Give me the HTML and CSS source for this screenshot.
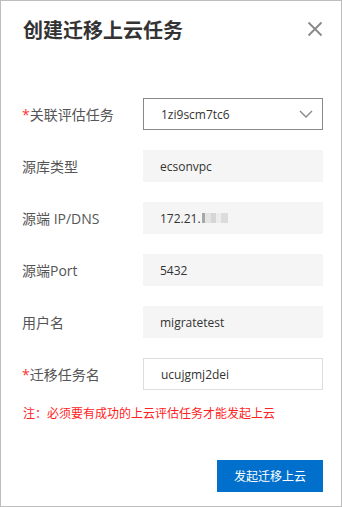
FILE: index.html
```html
<!DOCTYPE html>
<html lang="zh">
<head>
<meta charset="UTF-8">
<title>创建迁移上云任务</title>
<link rel="stylesheet" href="styles.css">
</head>
<body>
  <div class="dialog">
    <div class="dialog-head">
      <h2 class="title">创建迁移上云任务</h2>
      <span class="close">
        <svg width="16" height="16" viewBox="0 0 16 16"><path d="M1.5 1.5 L14.5 14.5 M14.5 1.5 L1.5 14.5" stroke="#888" stroke-width="1.8" fill="none"/></svg>
      </span>
    </div>
    <div class="form">
      <div class="row">
        <label class="label"><em>*</em>关联评估任务</label>
        <div class="ctrl select">
          <span>1zi9scm7tc6</span>
          <svg width="14" height="8" viewBox="0 0 14 8"><path d="M1 1 L7 7 L13 1" stroke="#888" stroke-width="1.4" fill="none"/></svg>
        </div>
      </div>
      <div class="row">
        <label class="label">源库类型</label>
        <div class="ctrl readonly">ecsonvpc</div>
      </div>
      <div class="row">
        <label class="label">源端 IP/DNS</label>
        <div class="ctrl readonly">172.21.<span class="mask"></span></div>
      </div>
      <div class="row">
        <label class="label">源端Port</label>
        <div class="ctrl readonly">5432</div>
      </div>
      <div class="row">
        <label class="label">用户名</label>
        <div class="ctrl readonly">migratetest</div>
      </div>
      <div class="row">
        <label class="label"><em>*</em>迁移任务名</label>
        <div class="ctrl input">ucujgmj2dei</div>
      </div>
      <p class="note">注：必须要有成功的上云评估任务才能发起上云</p>
    </div>
    <div class="footer">
      <button class="btn-primary">发起迁移上云</button>
    </div>
  </div>
</body>
</html>
```

FILE: styles.css
```css
body {
    margin: 0;
    font-family: "Segoe UI", "Open Sans", "Noto Sans CJK SC", sans-serif;
    color: #333;
}
.dialog {
    width: 342px;
    height: 507px;
    box-sizing: border-box;
    border: 1px solid #bdbdbd;
    background: #fff;
    display: flex;
    flex-direction: column;
}
.dialog-head {
    display: flex;
    justify-content: space-between;
    align-items: flex-start;
    padding: 16px 18px 0 22px;
}
.title {
    margin: 0;
    font-size: 20px;
    line-height: 28px;
    font-weight: bold;
    color: #333;
}
.close {
    margin-top: 4px;
    display: block;
    line-height: 0;
}
.form {
    padding: 53px 18px 0 21px;
    display: flex;
    flex-direction: column;
    gap: 20px;
}
.row {
    display: flex;
    align-items: center;
    height: 32px;
}
.label {
    width: 121px;
    font-size: 14px;
    color: #555;
}
.label em {
    font-style: normal;
    color: #f33;
}
.ctrl {
    width: 180px;
    height: 32px;
    box-sizing: border-box;
    padding-left: 17px;
    display: flex;
    align-items: center;
    font-size: 12px;
    color: #333;
}
.select {
    border: 1px solid #888;
    justify-content: space-between;
    padding-left: 17px;
    padding-right: 9px;
}
.readonly {
    background: #f5f5f5;
}
.input {
    border: 1px solid #ddd;
}
.mask {
    display: inline-block;
    width: 26px;
    height: 10px;
    margin-left: 1px;
    background: linear-gradient(90deg, #a8a8a8 0 3px, #e4e4e4 3px 9px, #d6d6d6 9px 14px, #ececec 14px 19px, #dcdcdc 19px 26px);
}
.note {
    margin: -6px 0 0 1px;
    font-size: 12px;
    color: #f22;
}
.footer {
    margin-top: auto;
    padding: 0 18px 14px 0;
    display: flex;
    justify-content: flex-end;
}
.btn-primary {
    width: 106px;
    height: 32px;
    border: none;
    background: #0070cc;
    color: #fff;
    font-family: inherit;
    font-size: 12px;
}
```
